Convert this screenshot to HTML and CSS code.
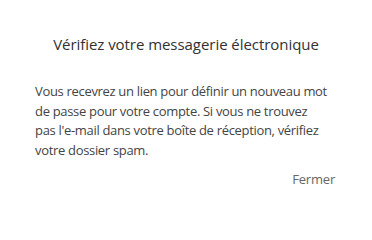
FILE: index.html
```html
<!DOCTYPE html>
<html lang="fr">
<head>
<meta charset="utf-8">
<link rel="stylesheet" href="styles.css">
</head>
<body>
<div class="dialog">
  <h1 class="title">Vérifiez votre messagerie électronique</h1>
  <p class="message">Vous recevrez un lien pour définir un nouveau mot de passe pour votre compte. Si vous ne trouvez pas&nbsp;l'e-mail dans votre boîte de réception, vérifiez votre dossier spam.</p>
  <div class="actions"><span class="close">Fermer</span></div>
</div>
</body>
</html>
```
FILE: styles.css
```css
html, body {
  margin: 0;
  padding: 0;
  background: #ffffff;
}
.dialog {
  width: 372px;
  height: 218px;
  box-sizing: border-box;
  padding: 32px 35px 0 35px;
  font-family: "Open Sans", "Noto Sans", sans-serif;
}
.title {
  margin: 0;
  font-size: 15px;
  font-weight: 400;
  line-height: 24px;
  color: #323232;
  text-align: center;
  letter-spacing: -0.05px;
}
.message {
  margin: 26px 0 0 0;
  font-size: 13px;
  line-height: 19.5px;
  letter-spacing: -0.32px;
  color: #444444;
}
.actions {
  display: flex;
  justify-content: flex-end;
  margin-top: 9px;
}
.close {
  font-size: 13px;
  line-height: 20px;
  letter-spacing: -0.2px;
  color: #666666;
  padding-right: 2px;
}
```
